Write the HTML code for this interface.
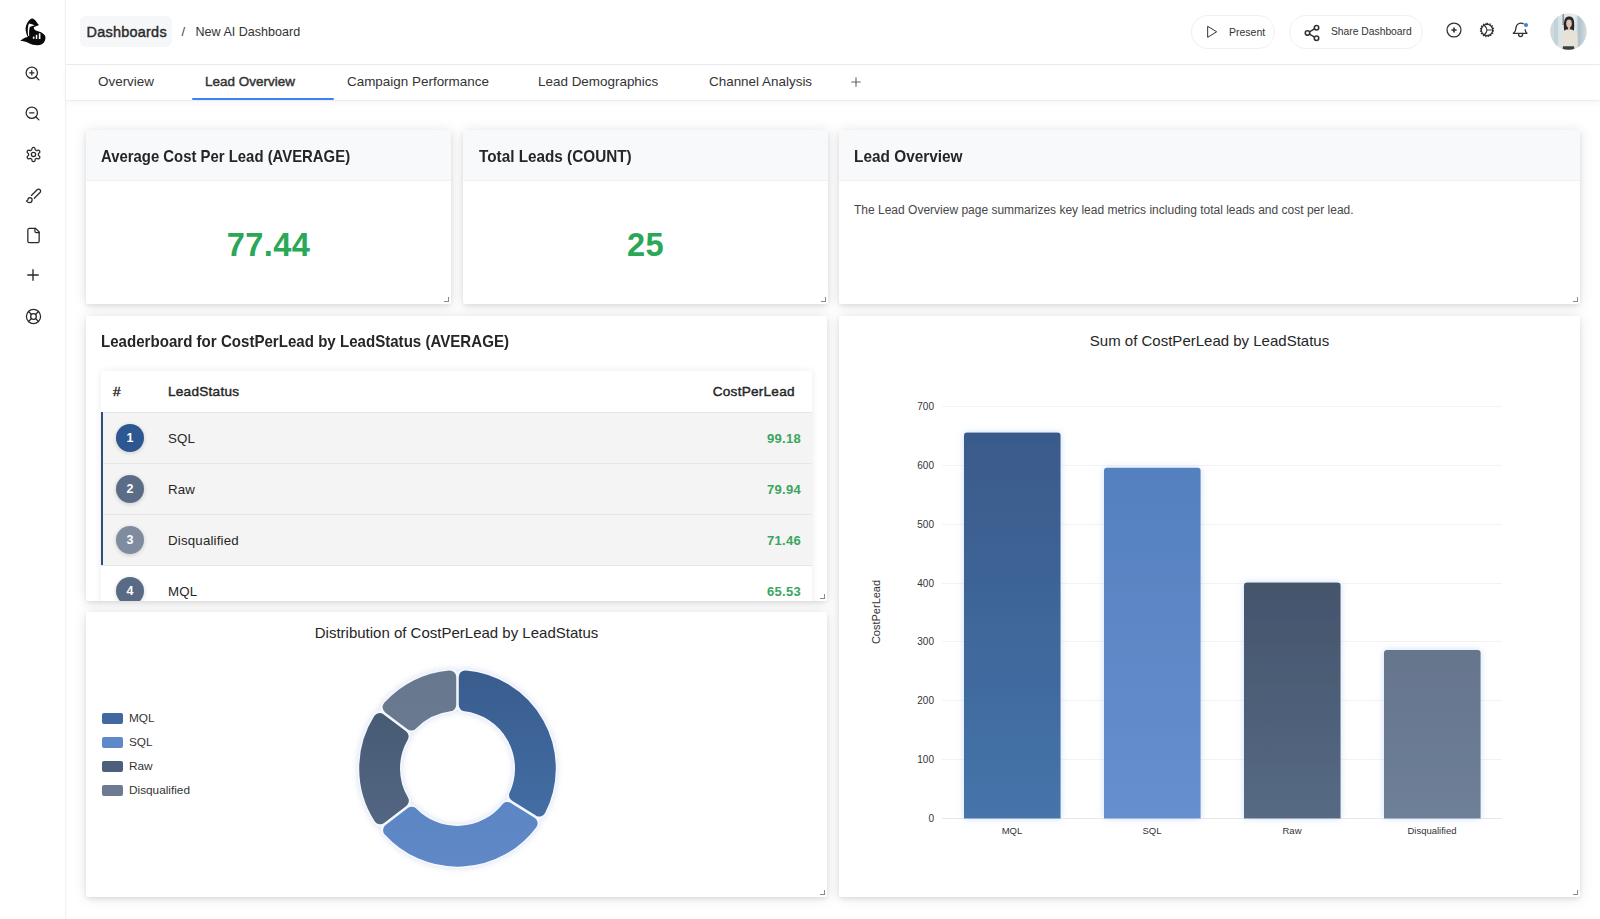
<!DOCTYPE html>
<html><head><meta charset="utf-8">
<style>
*{box-sizing:border-box;margin:0;padding:0}
html,body{width:1600px;height:919px;overflow:hidden;background:#fff;font-family:"Liberation Sans",sans-serif;color:#262626}
.abs{position:absolute}
.side{position:absolute;left:0;top:0;width:66px;height:919px;background:#fff;border-right:1px solid #f3f3f3;box-shadow:1px 0 1px rgba(0,0,0,.02)}
.side svg{position:absolute;fill:none;stroke:#2a2a2a;stroke-width:1.8;stroke-linecap:round;stroke-linejoin:round}
.hdr{position:absolute;left:66px;top:0;width:1534px;height:64px;background:#fff;box-shadow:0 1px 1px rgba(0,0,0,.05),0 2px 5px rgba(0,0,0,.04)}
.tabs{position:absolute;left:66px;top:65px;width:1534px;height:35px;background:#fff;box-shadow:0 1px 1px rgba(0,0,0,.04),0 3px 6px rgba(0,0,0,.04)}
.tab{position:absolute;top:74px;font-size:13.45px;color:#333;white-space:nowrap;line-height:15px}
.card{position:absolute;background:#fff;border-radius:2px;box-shadow:0 2px 4px rgba(0,0,0,.08),0 1px 14px rgba(0,0,0,.11);overflow:hidden}
.ch{height:51px;background:#f8f9fa;border-bottom:1px solid #f0f0f0;color:#262626;white-space:nowrap;position:relative}
.ch b,.ttl{position:absolute;left:15px;top:17px;font-weight:bold;font-size:16.2px;line-height:19px;transform:scaleX(0.92);transform-origin:0 0;color:#262626;white-space:nowrap}
.big{position:absolute;left:0;right:0;top:96.6px;text-align:center;font-size:32.6px;letter-spacing:0.4px;font-weight:bold;color:#2aa757;line-height:36px}
.rz{position:absolute;right:2px;bottom:2px;width:5px;height:5px;border-right:1.3px solid #8a8a8a;border-bottom:1.3px solid #8a8a8a}
.hbtn{position:absolute;top:15px;height:34px;border:1px solid #f0f0f0;border-radius:17px;background:#fff}
.hbtn span{position:absolute;top:10px;font-size:10.5px;color:#333;white-space:nowrap}
.ic{position:absolute;fill:none;stroke:#333;stroke-width:1.5;stroke-linecap:round;stroke-linejoin:round}
.tbl{position:absolute;left:15px;top:55px;width:711px;height:260px;background:#fff;box-shadow:0 0 8px rgba(0,0,0,.08)}
.th{position:absolute;top:12.6px;font-size:13.6px;-webkit-text-stroke:0.42px #262626;letter-spacing:0.25px;color:#262626;white-space:nowrap}
.row{position:absolute;left:0;width:711px;height:51px;background:#fff;border-top:1px solid #e6e6e6}
.row.hl{background:#f4f4f4}
.badge{position:absolute;left:15px;top:11px;width:28px;height:28px;border-radius:50%;color:#fff;font-size:12.5px;font-weight:bold;text-align:center;line-height:28px;box-shadow:0 1px 4px rgba(0,0,0,.18)}
.nm{position:absolute;left:67px;top:17.8px;font-size:13.3px;letter-spacing:0.18px;color:#262626}
.val{position:absolute;right:11px;top:18px;font-size:13px;font-weight:bold;color:#3aa55f;letter-spacing:0.3px}
.lg{position:absolute;left:16px;font-size:11.8px;color:#333;white-space:nowrap;line-height:13px;height:13px}
.lg i{position:absolute;left:0;top:0.5px;width:21px;height:11px;border-radius:2px}
.lg{padding-left:27px}
</style></head><body>
<!-- SIDEBAR -->
<div class="side">
  <svg style="left:16px;top:14px;width:34px;height:36px;stroke:none;fill:#0a0a0a" viewBox="0 0 868 919">
    <path d="M420 112C450 118 470 140 490 160C520 195 545 235 585 282C560 300 500 312 455 338C448 370 470 405 520 428C600 445 690 480 740 550C770 630 740 720 660 775C560 820 430 795 320 740C250 705 180 690 110 690C150 640 220 600 300 585C270 520 240 440 245 370C250 280 290 200 350 145C375 125 395 112 420 112Z"/>
    <path fill="#fff" d="M335 240C380 248 430 262 480 288C440 300 390 310 352 330C335 400 330 470 338 555L312 560C298 470 296 380 312 300C318 275 325 255 335 240Z"/>
    <rect x="430" y="578" width="40" height="55" fill="#fff"/>
    <rect x="505" y="532" width="38" height="106" fill="#fff"/>
    <rect x="582" y="492" width="42" height="148" fill="#fff"/>
  </svg>
  <svg style="left:24.2px;top:64.8px;width:17px;height:17px" viewBox="0 0 24 24"><circle cx="11" cy="11" r="8"/><path d="M21 21l-4.35-4.35M11 8v6M8 11h6"/></svg>
  <svg style="left:24.2px;top:104.8px;width:17px;height:17px" viewBox="0 0 24 24"><circle cx="11" cy="11" r="8"/><path d="M21 21l-4.35-4.35M8 11h6"/></svg>
  <svg style="left:24.5px;top:145.8px;width:17px;height:17px" viewBox="0 0 24 24"><path d="M12.22 2h-.44a2 2 0 0 0-2 2v.18a2 2 0 0 1-1 1.73l-.43.25a2 2 0 0 1-2 0l-.15-.08a2 2 0 0 0-2.73.73l-.22.38a2 2 0 0 0 .73 2.73l.15.1a2 2 0 0 1 1 1.72v.51a2 2 0 0 1-1 1.74l-.15.09a2 2 0 0 0-.73 2.73l.22.38a2 2 0 0 0 2.730.73l.15-.08a2 2 0 0 1 2 0l.43.25a2 2 0 0 1 1 1.73V20a2 2 0 0 0 2 2h.44a2 2 0 0 0 2-2v-.18a2 2 0 0 1 1-1.73l.43-.25a2 2 0 0 1 2 0l.15.08a2 2 0 0 0 2.73-.73l.22-.39a2 2 0 0 0-.73-2.73l-.15-.08a2 2 0 0 1-1-1.74v-.5a2 2 0 0 1 1-1.74l.15-.09a2 2 0 0 0 .73-2.73l-.22-.38a2 2 0 0 0-2.73-.73l-.15.08a2 2 0 0 1-2 0l-.43-.25a2 2 0 0 1-1-1.73V4a2 2 0 0 0-2-2z"/><circle cx="12" cy="12" r="3"/></svg>
  <svg style="left:24.5px;top:186.8px;width:17px;height:17px" viewBox="0 0 24 24"><path d="M9.06 11.9l8.07-8.06a2.85 2.85 0 1 1 4.03 4.03l-8.06 8.08"/><path d="M7.07 14.94c-1.66 0-3 1.35-3 3.02 0 1.33-2.5 1.52-2 2.02 1.08 1.1 2.49 2.02 4 2.02 2.2 0 4-1.8 4-4.04a3.01 3.01 0 0 0-3-3.02z"/></svg>
  <svg style="left:24.5px;top:226.9px;width:17px;height:17px" viewBox="0 0 24 24"><path d="M15 2H6a2 2 0 0 0-2 2v16a2 2 0 0 0 2 2h12a2 2 0 0 0 2-2V7Z"/><path d="M14 2v4a2 2 0 0 0 2 2h4"/></svg>
  <svg style="left:24px;top:266.4px;width:18px;height:18px" viewBox="0 0 24 24"><path d="M5 12h14M12 5v14"/></svg>
  <svg style="left:24.5px;top:307.8px;width:17px;height:17px" viewBox="0 0 24 24"><circle cx="12" cy="12" r="10"/><circle cx="12" cy="12" r="4"/><path d="M4.93 4.93l4.24 4.24M14.83 9.17l4.24-4.24M14.83 14.83l4.24 4.24M9.17 14.83l-4.24 4.24"/></svg>
</div>

<!-- HEADER -->
<div class="hdr"></div>
<div class="abs" style="left:80px;top:16px;width:92px;height:31px;background:#f6f7f9;border-radius:6px"></div>
<div class="abs" style="left:86.5px;top:23.6px;font-size:14.45px;-webkit-text-stroke:0.42px #2b2b2b;letter-spacing:0.25px;color:#2b2b2b;white-space:nowrap">Dashboards</div>
<div class="abs" style="left:181.5px;top:24px;font-size:13px;color:#444">/</div>
<div class="abs" style="left:195.5px;top:24.8px;font-size:12.55px;color:#333;white-space:nowrap">New AI Dashboard</div>

<div class="hbtn" style="left:1191px;width:84px">
  <svg class="ic" style="left:11px;top:8px;width:16px;height:16px" viewBox="0 0 24 24"><path d="M7 4v16l13 -8z"/></svg>
  <span style="left:37px;top:9.5px">Present</span>
</div>
<div class="hbtn" style="left:1289px;width:134px">
  <svg class="ic" style="left:13px;top:7.6px;width:18px;height:18px;stroke-width:2.1" viewBox="0 0 24 24"><circle cx="18" cy="5" r="3"/><circle cx="6" cy="12" r="3"/><circle cx="18" cy="19" r="3"/><path d="M8.59 13.51l6.83 3.98M15.41 6.51l-6.82 3.98"/></svg>
  <span style="left:41px;top:9.5px;font-size:10.3px">Share Dashboard</span>
</div>
<svg class="ic" style="left:1444.5px;top:21px;width:18px;height:18px;stroke-width:1.7" viewBox="0 0 24 24"><circle cx="12" cy="12" r="9.3"/><path stroke-width="2.2" d="M9.3 12h5.4M12 9.3v5.4"/></svg>
<svg class="ic" style="left:1478px;top:21.4px;width:18px;height:18px;stroke-width:1.6" viewBox="0 0 24 24">
  <circle cx="12" cy="12" r="7.6"/>
  <path d="M12 12h7.4M8 5.3Q12 9 12 12Q12 15 8 18.7" />
  <path stroke-width="2" stroke-linecap="butt" stroke-dasharray="1.75 1.6" d="M12 3.45a8.55 8.55 0 1 1 0 17.1a8.55 8.55 0 1 1 0 -17.1"/>
</svg>
<svg class="ic" style="left:1511px;top:21px;width:19px;height:19px;stroke-width:1.7" viewBox="0 0 24 24"><path d="M15.3 3.4A6.2 6.2 0 0 0 6.3 8.3c0 3.4-.9 5.4-3.3 7.3h17.2c-1.2-1-1.9-2.3-2.3-4.5"/><path d="M9.6 15.9v1.3a2.5 2.5 0 0 0 5 0v-1.3"/></svg>
<div class="abs" style="left:1524px;top:23px;width:4px;height:4px;border-radius:50%;background:#3f7fd1"></div>
<svg class="abs" style="left:1550px;top:13px;width:37px;height:37px" viewBox="0 0 37 37">
  <defs>
    <clipPath id="av"><circle cx="18.5" cy="18.5" r="18.3"/></clipPath>
    <linearGradient id="avbg" x1="0" x2="1" y1="0" y2="0"><stop offset="0" stop-color="#c9d8dc"/><stop offset=".3" stop-color="#dbe6ea"/><stop offset=".65" stop-color="#e6edf0"/><stop offset=".85" stop-color="#bccbd2"/><stop offset="1" stop-color="#d5e0e4"/></linearGradient>
  </defs>
  <g clip-path="url(#av)">
    <rect width="37" height="37" fill="url(#avbg)"/>
    <rect x="4" y="0" width="4" height="37" fill="#b7c9d0" opacity=".6"/>
    <rect x="27.5" y="0" width="3" height="37" fill="#a9bcc6" opacity=".7"/>
    <rect x="12.6" y="0" width="1.1" height="12" fill="#6a7378"/>
    <path d="M10.8 37v-13c0-4 2-7 8.2-7.2c6.2.2 8.6 3 8.6 7.2v13z" fill="#e7e2d8"/>
    <path d="M12.5 37l.5-3.8h11l.5 3.8z" fill="#3a3f40"/>
    <path d="M14.3 17.8c-.8-4.4-.6-10 1-12.6c1.6-2.4 6.4-2.4 7.8.2c1.4 2.6 1.4 8 .8 12.4l-2.2-1.2h-5.4z" fill="#2b2523"/>
    <ellipse cx="19" cy="10.5" rx="2.8" ry="4" fill="#dcc4b4"/>
    <rect x="17.9" y="14" width="2.2" height="3" fill="#d6bba8"/>
  </g>
</svg>

<!-- TABS -->
<div class="tabs"></div>
<div class="tab" style="left:98px">Overview</div>
<div class="tab" style="left:205px;-webkit-text-stroke:0.45px #333;letter-spacing:0.02px">Lead Overview</div>
<div class="tab" style="left:347px">Campaign Performance</div>
<div class="tab" style="left:538px">Lead Demographics</div>
<div class="tab" style="left:709px">Channel Analysis</div>
<svg class="ic" style="left:851px;top:76.5px;width:10px;height:10px;stroke:#666;stroke-width:1.15" viewBox="0 0 10 10"><path d="M5 .7v8.6M.7 5h8.6"/></svg>
<div class="abs" style="left:192px;top:98px;width:142px;height:2px;background:#3b82f6;border-radius:1px"></div>

<!-- ROW 1 -->
<div class="card" style="left:86px;top:130px;width:365px;height:174px">
  <div class="ch"><b>Average Cost Per Lead (AVERAGE)</b></div>
  <div class="big">77.44</div>
  <div class="rz"></div>
</div>
<div class="card" style="left:463px;top:130px;width:365px;height:174px">
  <div class="ch"><b style="transform:scaleX(0.945);left:15.5px">Total Leads (COUNT)</b></div>
  <div class="big">25</div>
  <div class="rz"></div>
</div>
<div class="card" style="left:839px;top:130px;width:741px;height:174px">
  <div class="ch"><b style="transform:scaleX(0.95)">Lead Overview</b></div>
  <div class="abs" style="left:15px;top:73px;font-size:12px;color:#474747;white-space:nowrap">The Lead Overview page summarizes key lead metrics including total leads and cost per lead.</div>
  <div class="rz"></div>
</div>


<div class="card" style="left:86px;top:316px;width:741px;height:285px">
  <div class="ttl" style="top:15.8px;transform:scaleX(0.932)">Leaderboard for CostPerLead by LeadStatus (AVERAGE)</div>
  <div class="tbl">
    <div class="th" style="left:12px">#</div>
    <div class="th" style="left:67px">LeadStatus</div>
    <div class="th" style="right:17.2px">CostPerLead</div>
    <div class="row hl" style="top:41px"><div class="badge" style="background:#2c5790">1</div><div class="nm">SQL</div><div class="val">99.18</div></div>
    <div class="row hl" style="top:92px"><div class="badge" style="background:#5b6d86">2</div><div class="nm">Raw</div><div class="val">79.94</div></div>
    <div class="row hl" style="top:143px"><div class="badge" style="background:#7f8ca0">3</div><div class="nm">Disqualified</div><div class="val">71.46</div></div>
    <div class="row" style="top:194px"><div class="badge" style="background:#586a84">4</div><div class="nm">MQL</div><div class="val">65.53</div></div>
    <div class="abs" style="left:0;top:41px;width:2px;height:153px;background:#2c4f80"></div>
  </div>
  <div class="rz"></div>
</div>

<div class="card" style="left:86px;top:612px;width:741px;height:285px">
  <div class="abs" style="left:0;right:0;top:12px;text-align:center;font-size:15px;color:#262626">Distribution of CostPerLead by LeadStatus</div>
  <div class="lg" style="top:100px"><i style="background:#4168a0"></i>MQL</div>
  <div class="lg" style="top:124px"><i style="background:#5e89c9"></i>SQL</div>
  <div class="lg" style="top:148px"><i style="background:#4d607b"></i>Raw</div>
  <div class="lg" style="top:172px"><i style="background:#6c7b92"></i>Disqualified</div>
  <div class="rz"></div>
</div>
<svg class="abs" style="left:0;top:0;width:1600px;height:919px;pointer-events:none" viewBox="0 0 1600 919">
  <defs>
    <linearGradient id="gM" gradientUnits="userSpaceOnUse" x1="0" y1="670" x2="0" y2="868"><stop offset="0" stop-color="#395c8e"/><stop offset="1" stop-color="#4673ab"/></linearGradient>
    <linearGradient id="gS" gradientUnits="userSpaceOnUse" x1="0" y1="670" x2="0" y2="868"><stop offset="0" stop-color="#5580bf"/><stop offset="1" stop-color="#6088c6"/></linearGradient>
    <linearGradient id="gR" gradientUnits="userSpaceOnUse" x1="0" y1="670" x2="0" y2="868"><stop offset="0" stop-color="#44566f"/><stop offset="1" stop-color="#566b88"/></linearGradient>
    <linearGradient id="gD" gradientUnits="userSpaceOnUse" x1="0" y1="670" x2="0" y2="868"><stop offset="0" stop-color="#67778e"/><stop offset="1" stop-color="#6f7f97"/></linearGradient>
    <filter id="glow2" x="-20%" y="-20%" width="140%" height="140%"><feGaussianBlur in="SourceAlpha" stdDeviation="3.5"/><feColorMatrix values="0 0 0 0 0.5  0 0 0 0 0.65  0 0 0 0 0.92  0 0 0 0.75 0"/><feMerge><feMergeNode/><feMergeNode in="SourceGraphic"/></feMerge></filter>
    <filter id="glow3" x="-20%" y="-20%" width="140%" height="140%"><feGaussianBlur in="SourceAlpha" stdDeviation="3"/><feColorMatrix values="0 0 0 0 0.45  0 0 0 0 0.55  0 0 0 0 0.75  0 0 0 0.55 0"/><feMerge><feMergeNode/><feMergeNode in="SourceGraphic"/></feMerge></filter>
    <filter id="glow" x="-20%" y="-20%" width="140%" height="140%"><feGaussianBlur in="SourceAlpha" stdDeviation="3"/><feColorMatrix values="0 0 0 0 0.45  0 0 0 0 0.6  0 0 0 0 0.85  0 0 0 0.45 0"/><feMerge><feMergeNode/><feMergeNode in="SourceGraphic"/></feMerge></filter>
    <linearGradient id="bM" x1="0" y1="0" x2="0" y2="1"><stop offset="0" stop-color="#395a8a"/><stop offset="1" stop-color="#4574aa"/></linearGradient>
    <linearGradient id="bS" x1="0" y1="0" x2="0" y2="1"><stop offset="0" stop-color="#5580bf"/><stop offset="1" stop-color="#668fcf"/></linearGradient>
    <linearGradient id="bR" x1="0" y1="0" x2="0" y2="1"><stop offset="0" stop-color="#44546b"/><stop offset="1" stop-color="#566a84"/></linearGradient>
    <linearGradient id="bD" x1="0" y1="0" x2="0" y2="1"><stop offset="0" stop-color="#65758c"/><stop offset="1" stop-color="#6e7f98"/></linearGradient>
  </defs>
  <g filter="url(#glow3)">
<path d="M464.05 676.83A91.8 91.8 0 0 1 538.73 811.17L515.03 796.44A64.0 64.0 0 0 0 464.05 704.74Z" fill="#f4f8fd" stroke="#f4f8fd" stroke-width="16" stroke-linejoin="round"/>
<path d="M531.81 822.30A91.8 91.8 0 0 1 388.78 829.27L410.93 812.31A64.0 64.0 0 0 0 508.11 807.57Z" fill="#f4f8fd" stroke="#f4f8fd" stroke-width="16" stroke-linejoin="round"/>
<path d="M380.82 818.87A91.8 91.8 0 0 1 380.41 718.56L402.70 735.34A64.0 64.0 0 0 0 402.97 801.90Z" fill="#f4f8fd" stroke="#f4f8fd" stroke-width="16" stroke-linejoin="round"/>
<path d="M388.29 708.09A91.8 91.8 0 0 1 450.95 676.83L450.95 704.74A64.0 64.0 0 0 0 410.58 724.87Z" fill="#f4f8fd" stroke="#f4f8fd" stroke-width="16" stroke-linejoin="round"/>
</g><g>
<path d="M465.25 676.93A91.8 91.8 0 0 1 539.28 810.10L515.55 795.35A64.0 64.0 0 0 0 465.25 704.87Z" fill="url(#gM)" stroke="url(#gM)" stroke-width="13.0" stroke-linejoin="round"/>
<path d="M531.10 823.27A91.8 91.8 0 0 1 389.59 830.16L411.77 813.18A64.0 64.0 0 0 0 507.37 808.52Z" fill="url(#gS)" stroke="url(#gS)" stroke-width="13.0" stroke-linejoin="round"/>
<path d="M380.16 817.86A91.8 91.8 0 0 1 379.76 719.57L402.09 736.38A64.0 64.0 0 0 0 402.35 800.87Z" fill="url(#gR)" stroke="url(#gR)" stroke-width="13.0" stroke-linejoin="round"/>
<path d="M389.09 707.19A91.8 91.8 0 0 1 449.75 676.93L449.75 704.87A64.0 64.0 0 0 0 411.41 724.00Z" fill="url(#gD)" stroke="url(#gD)" stroke-width="13.0" stroke-linejoin="round"/>
  </g>
</svg>



<div class="card" style="left:839px;top:316px;width:741px;height:581px">
  <div class="abs" style="left:0;right:0;top:16px;text-align:center;font-size:15px;color:#262626">Sum of CostPerLead by LeadStatus</div>
  <div class="rz"></div>
</div>
<svg class="abs" style="left:0;top:0;width:1600px;height:919px;pointer-events:none;font-family:'Liberation Sans',sans-serif" viewBox="0 0 1600 919">
  <g stroke="#f3f3f3" stroke-width="1">
    <path d="M942 406.5H1502M942 465.5H1502M942 524.5H1502M942 583.5H1502M942 641.5H1502M942 700.5H1502M942 759.5H1502"/>
  </g>
  <path d="M942 818.5H1502" stroke="#e8e8e8" stroke-width="1"/>
  <g font-size="10" fill="#333" text-anchor="end">
    <text x="934" y="409.5">700</text><text x="934" y="468.5">600</text><text x="934" y="527.5">500</text><text x="934" y="586.5">400</text>
    <text x="934" y="645">300</text><text x="934" y="704">200</text><text x="934" y="763">100</text><text x="934" y="822">0</text>
  </g>
  <text transform="translate(880 612) rotate(-90)" font-size="11" fill="#333" text-anchor="middle">CostPerLead</text>
  <g filter="url(#glow2)">
    <path d="M964 818.5V435.5a3 3 0 0 1 3 -3h90.6a3 3 0 0 1 3 3V818.5z" fill="url(#bM)"/>
    <path d="M1104 818.5V470.8a3 3 0 0 1 3 -3h90.6a3 3 0 0 1 3 3V818.5z" fill="url(#bS)"/>
    <path d="M1244 818.5V585.6a3 3 0 0 1 3 -3h90.6a3 3 0 0 1 3 3V818.5z" fill="url(#bR)"/>
    <path d="M1384 818.5V653.1a3 3 0 0 1 3 -3h90.6a3 3 0 0 1 3 3V818.5z" fill="url(#bD)"/>
  </g>
  <g font-size="9.5" fill="#333" text-anchor="middle">
    <text x="1012" y="834">MQL</text><text x="1152" y="834">SQL</text><text x="1292" y="834">Raw</text><text x="1432" y="834">Disqualified</text>
  </g>
</svg>

</body></html>
